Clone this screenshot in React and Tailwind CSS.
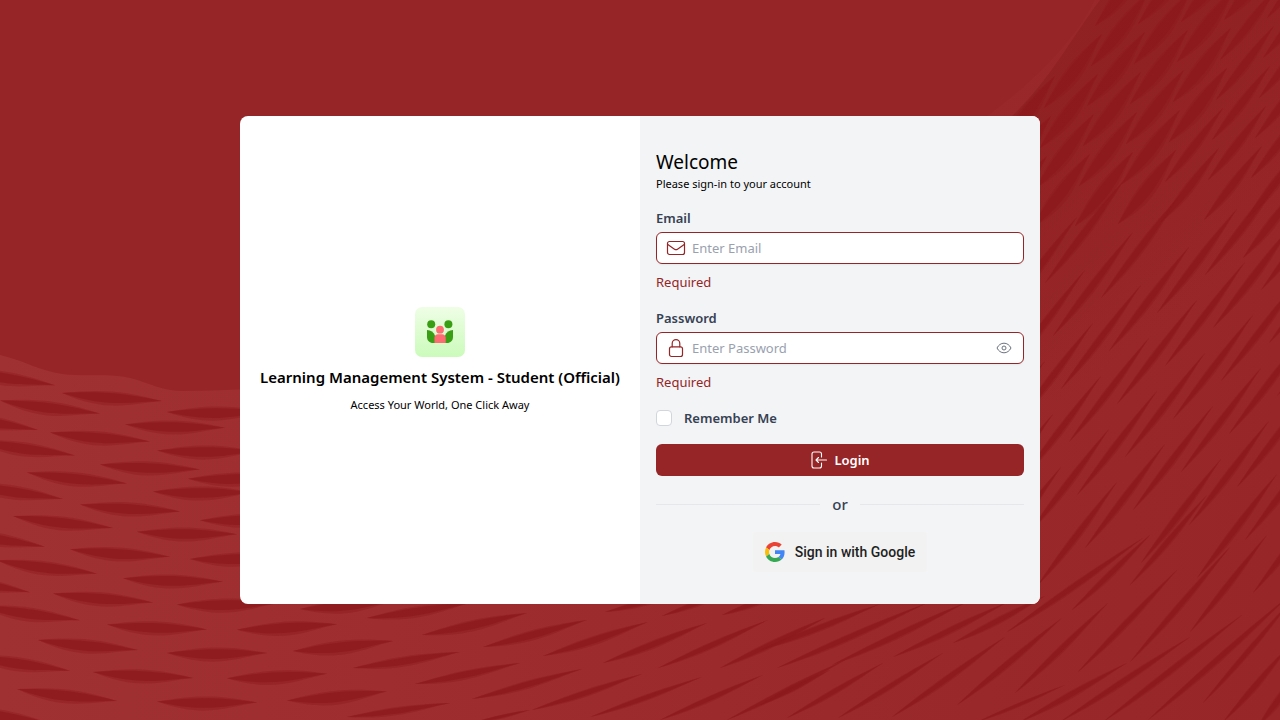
import React from "react";

const LEFT_CENTERS = [
  [112, 397], [50, 407], [175, 426], [100, 437], [217, 412], [25, 448], [150, 467], [207, 451],
  [77, 478], [13, 491], [203, 492], [130, 508], [63, 522], [187, 533], [5, 377], [-12, 421], [238, 478],
  [120, 553], [47, 567], [173, 580], [103, 598], [30, 613], [227, 604], [157, 627], [88, 645],
  [20, 663], [287, 627], [217, 653], [143, 675], [343, 646], [277, 676], [67, 695], [207, 702],
  [337, 696], [240, 558], [0, 715], [-20, 583], [-5, 538], [250, 519], [350, 604],
];

const LOWER = [
  [367, 618, 470, 603, 11], [422, 635, 527, 613, 11], [483, 647, 587, 620, 10], [543, 656, 648, 622, 9],
  [603, 663, 707, 623, 8], [658, 668, 768, 620, 7], [720, 668, 825, 618, 7], [353, 668, 460, 652, 10],
  [415, 684, 520, 663, 9], [472, 699, 582, 669, 8], [532, 710, 642, 674, 7], [590, 717, 702, 677, 6],
  [660, 720, 763, 675, 6], [727, 720, 845, 660, 6], [347, 717, 450, 703, 8], [475, 722, 530, 710, 4],
  [605, 612, 690, 590, 7], [662, 616, 750, 582, 7], [722, 615, 800, 585, 7], [760, 650, 880, 604, 7],
  [777, 668, 927, 603, 7], [832, 665, 967, 602, 7], [893, 657, 1008, 602, 7], [953, 643, 1045, 596, 7],
  [1007, 632, 1143, 538, 7], [760, 705, 830, 670, 5], [787, 718, 883, 663, 6], [838, 718, 943, 653, 6],
  [892, 717, 1005, 637, 7], [957, 705, 1062, 618, 7], [1015, 693, 1108, 603, 7], [1078, 672, 1177, 570, 7],
  [1130, 662, 1230, 547, 7], [1072, 610, 1150, 535, 7], [1130, 585, 1207, 495, 7], [1190, 632, 1267, 535, 7],
  [977, 722, 1065, 685, 4], [1020, 722, 1127, 663, 7], [1060, 722, 1190, 637, 7], [1103, 722, 1242, 615, 7],
  [1148, 720, 1290, 595, 7], [1203, 703, 1292, 600, 6], [1223, 722, 1290, 645, 7], [1258, 726, 1300, 670, 8],
];

function buildLenses() {
  const out = [];
  LEFT_CENTERS.forEach(([cx, cy]) => {
    const slope = 0.17 - cx * 0.00078;
    const half = 50;
    out.push([cx - half, cy - half * slope, cx + half, cy + half * slope, 14]);
  });
  LOWER.forEach((l) => out.push(l));
  for (let i = -6; i < 6; i++) {
    for (let j = -8; j < 9; j++) {
      const tx = 1197 + i * 56 + j * 8;
      const ty = 300 + i * 15 + j * 53;
      const cy = ty + 50;
      if (cy > 215 && cy < 545 && tx > 1040 && tx < 1370) out.push([tx - 80, ty + 104, tx, ty, cy < 300 ? 9 : 8]);
    }
  }
  for (let i = -5; i < 6; i++) {
    for (let j = -2; j < 8; j++) {
      const cx = 1163 + i * 43 - j * 4;
      const cy = 27 - i * 2 + j * 40;
      const edge = 1004 + (115 - cy) * 0.83;
      const thick = cx + cy * 0.5 > 1255 ? 10 : 16;
      if (cy < 222 && cx > edge + 12) out.push([cx - 29, cy + 37, cx + 29, cy - 37, thick]);
    }
  }
  return out;
}

function lensPath([x1, y1, x2, y2, t], k) {
  const dx = x2 - x1;
  const dy = y2 - y1;
  const len = Math.hypot(dx, dy);
  const nx = (-dy / len) * t * k;
  const ny = (dx / len) * t * k;
  const p = (f, o) => `${(x1 + dx * f + nx * o).toFixed(1)} ${(y1 + dy * f + ny * o).toFixed(1)}`;
  return `M${p(0, 0)}C${p(0.38, -0.45)} ${p(0.6, -0.5)} ${p(1, 0)}C${p(0.7, 0.3)} ${p(0.48, 1.1)} ${p(0, 0)}Z`;
}

const LENSES = buildLenses();

function Backdrop() {
  return (
    <svg className="absolute inset-0 h-full w-full" viewBox="0 0 1280 720" preserveAspectRatio="xMidYMid slice" aria-hidden="true">
      <defs>
        <linearGradient id="weave" x1="0" x2="1280" y1="0" y2="0" gradientUnits="userSpaceOnUse">
          <stop offset="0" stopColor="#a03133" />
          <stop offset=".3" stopColor="#9d2d2f" />
          <stop offset=".65" stopColor="#99292b" />
          <stop offset="1" stopColor="#962628" />
        </linearGradient>
        <linearGradient id="corner" x1="1080" y1="100" x2="1220" y2="280" gradientUnits="userSpaceOnUse">
          <stop offset="0" stopColor="#8f2022" />
          <stop offset="1" stopColor="#8f2022" stopOpacity="0" />
        </linearGradient>
      </defs>
      <rect width="1280" height="720" fill="#952527" />
      <path d="M0 355C25 361 40 371 62 374C85 377 110 373 130 378C150 383 160 391 185 391C400 390 700 330 985 118C1050 70 1080 30 1095 0H1280V720H0Z" fill="url(#weave)" />
      <path d="M1010 118C1050 80 1070 40 1100 0H1280V400H1000Z" fill="url(#corner)" opacity=".8" />
      <g fill="#8b1a1c">
        {LENSES.map((l, i) => (
          <g key={i}>
            <path d={lensPath(l, 1.1)} opacity=".4" />
            <path d={lensPath(l, 0.75)} opacity=".7" />
          </g>
        ))}
      </g>
    </svg>
  );
}

function BrandMark() {
  return (
    <svg width="50" height="50" viewBox="0 0 50 50" aria-hidden="true">
      <defs>
        <linearGradient id="tile" x1="0" y1="0" x2="0" y2="1">
          <stop offset="0" stopColor="#effee6" />
          <stop offset="1" stopColor="#cbfbbb" />
        </linearGradient>
      </defs>
      <rect width="50" height="50" rx="7" fill="url(#tile)" />
      <g fill="#3a9e14">
        <circle cx="16.2" cy="17.2" r="4" />
        <circle cx="33.4" cy="17.2" r="4" />
        <path d="M12 23C16 23.300 18.500 25 20 28.500V36H18C14.500 36 12 33.500 12 30Z" />
        <path d="M38 23C34 23.300 31.500 25 30 28.500V36H32C35.500 36 38 33.500 38 30Z" />
      </g>
      <circle cx="25" cy="22.700" r="3.900" fill="#ff6b72" />
      <path d="M19.500 36V30.500C19.500 28.500 21 27.200 23 27.200H27C29 27.200 30.700 28.500 30.700 30.500V36Z" fill="#ff6b72" />
    </svg>
  );
}

function MailIcon() {
  return (
    <svg width="20" height="20" viewBox="0 0 20 20" fill="none" stroke="#952527" strokeWidth="1.2" strokeLinecap="round" strokeLinejoin="round" aria-hidden="true">
      <rect x="1.500" y="3.500" width="17" height="13" rx="2" />
      <path d="M1.800 6.500L8.500 11.200C9.500 11.900 10.500 11.900 11.500 11.200L18.200 6.500" />
    </svg>
  );
}

function LockIcon() {
  return (
    <svg width="20" height="20" viewBox="0 0 20 20" fill="none" stroke="#952527" strokeWidth="1.2" strokeLinecap="round" strokeLinejoin="round" aria-hidden="true">
      <rect x="3.500" y="8.800" width="13" height="9.700" rx="2" />
      <path d="M6.200 8.800V5.500C6.200 3.300 7.900 1.600 10 1.600S13.800 3.300 13.800 5.500V8.800" />
    </svg>
  );
}

function EyeIcon() {
  return (
    <svg width="16" height="16" viewBox="0 0 16 16" fill="none" stroke="#6b7280" strokeWidth="1" strokeLinejoin="round" aria-hidden="true">
      <path d="M1 8C2.500 5 5 3.200 8 3.200S13.500 5 15 8C13.500 11 11 12.800 8 12.800S2.500 11 1 8Z" />
      <circle cx="8" cy="8" r="2" />
    </svg>
  );
}

function LoginIcon() {
  return (
    <svg width="18" height="18" viewBox="0 0 18 18" fill="none" stroke="#fff" strokeWidth="1.100" strokeLinecap="round" strokeLinejoin="round" aria-hidden="true">
      <path d="M11.500 6V3C11.500 1.800 10.700 1 9.500 1H4C2.800 1 2 1.800 2 3V15C2 16.200 2.800 17 4 17H9.500C10.700 17 11.500 16.200 11.500 15V12" />
      <path d="M16.500 9H6M8.500 6.500L6 9L8.500 11.500" />
    </svg>
  );
}

function GoogleIcon() {
  return (
    <svg width="20" height="20" viewBox="0 0 48 48" aria-hidden="true">
      <path fill="#EA4335" d="M24 9.500c3.540 0 6.710 1.220 9.210 3.600l6.850-6.850C35.900 2.380 30.470 0 24 0 14.620 0 6.510 5.380 2.560 13.220l7.980 6.190C12.430 13.720 17.740 9.500 24 9.500z" />
      <path fill="#4285F4" d="M46.980 24.550c0-1.570-.15-3.090-.38-4.550H24v9.020h12.940c-.58 2.960-2.260 5.480-4.780 7.180l7.730 6c4.510-4.180 7.090-10.360 7.090-17.650z" />
      <path fill="#FBBC05" d="M10.530 28.590c-.48-1.450-.76-2.990-.76-4.590s.27-3.140.76-4.590l-7.980-6.190C.92 16.460 0 20.120 0 24c0 3.880.92 7.540 2.560 10.780l7.970-6.190z" />
      <path fill="#34A853" d="M24 48c6.480 0 11.930-2.130 15.890-5.810l-7.730-6c-2.150 1.450-4.920 2.300-8.160 2.300-6.260 0-11.570-4.220-13.470-9.910l-7.980 6.190C6.510 42.620 14.620 48 24 48z" />
    </svg>
  );
}

function Field({ id, label, type, placeholder, icon, trailing }) {
  return (
    <div>
      <label htmlFor={id} className="block text-[13px] leading-5 font-semibold text-gray-700">{label}</label>
      <div className="mt-1 flex h-8 items-center rounded-md border border-[#952527] bg-white px-[9px] shadow-xs">
        {icon}
        <input id={id} type={type} placeholder={placeholder} className="ml-1.5 min-w-0 flex-1 bg-transparent text-[13px] leading-5 text-gray-700 outline-none placeholder:text-gray-400" />
        {trailing}
      </div>
      <p className="mt-2 text-[13px] leading-5 text-[#952527]">Required</p>
    </div>
  );
}

export default function App() {
  return (
    <main className="relative flex min-h-screen items-center justify-center overflow-hidden bg-[#952527] font-['Noto_Sans',sans-serif] text-black">
      <Backdrop />
      <div className="relative grid w-full max-w-[800px] grid-cols-2 overflow-hidden rounded-lg bg-white">
        <section className="flex flex-col items-center justify-center text-center">
          <BrandMark />
          <h1 className="mt-2 text-[15px] leading-6 font-semibold">Learning Management System - Student (Official)</h1>
          <p className="mt-2 text-[11px] leading-4">Access Your World, One Click Away</p>
        </section>
        <section className="bg-gray-100 px-4 py-8">
          <h2 className="text-[19px] leading-7">Welcome</h2>
          <p className="text-[11px] leading-4">Please sign-in to your account</p>
          <form className="mt-4" onSubmit={(e) => e.preventDefault()}>
            <div className="flex flex-col gap-4">
              <Field id="email" label="Email" type="email" placeholder="Enter Email" icon={<MailIcon />} />
              <Field
                id="password"
                label="Password"
                type="password"
                placeholder="Enter Password"
                icon={<LockIcon />}
                trailing={<button type="button" aria-label="Show password" className="mr-0.5"><EyeIcon /></button>}
              />
              <div className="flex h-5 items-center gap-3">
                <input id="remember" type="checkbox" className="h-4 w-4 appearance-none rounded border border-gray-300 bg-white checked:bg-[#952527]" />
                <label htmlFor="remember" className="text-[13px] leading-5 font-semibold text-gray-700">Remember Me</label>
              </div>
              <button type="submit" className="flex h-8 w-full items-center justify-center gap-1.5 rounded-md bg-[#952527] text-[13px] leading-5 font-semibold text-white">
                <LoginIcon />
                Login
              </button>
            </div>
            <div className="mt-4 flex h-6 items-center gap-3">
              <span className="h-px flex-1 bg-gray-200" />
              <span className="text-[15px] leading-6 font-medium text-gray-700">or</span>
              <span className="h-px flex-1 bg-gray-200" />
            </div>
            <button type="button" className="mx-auto mt-4 flex h-10 items-center gap-2.5 rounded bg-[#f2f2f2] px-3 font-[Roboto,sans-serif] text-sm font-medium text-[#1f1f1f]">
              <GoogleIcon />
              Sign in with Google
            </button>
          </form>
        </section>
      </div>
    </main>
  );
}
